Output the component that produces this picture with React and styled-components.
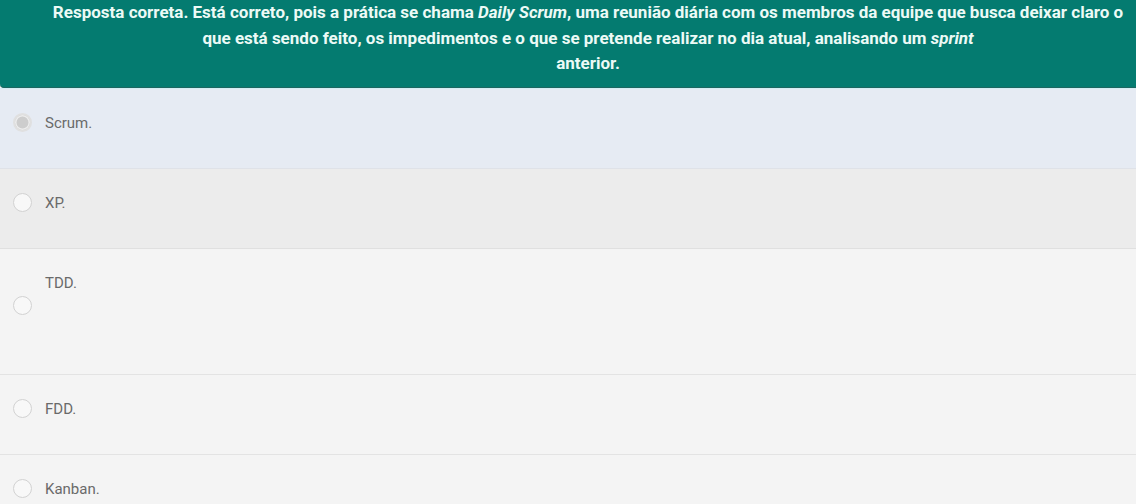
import React from 'react'
import styled, { createGlobalStyle } from 'styled-components'

const GlobalStyle = createGlobalStyle`
body {
  margin: 0;
  background-color: #f4f4f4;
  font-family: Roboto, "Liberation Sans", sans-serif;
}
`;

const Page = styled.div`
width: 1136px;
height: 504px;
overflow: hidden;
`;

const Feedback = styled.div`
background-color: #047b70;
color: #ecfaf6;
font-size: 17px;
font-weight: 700;
line-height: 25.5px;
text-align: center;
white-space: nowrap;
padding: 0 0 10px 40px;
border-bottom: 1px solid #1d6660;
border-bottom-left-radius: 4px;
`;

const Em = styled.em`
font-style: italic;
`;

const List = styled.div`
display: flex;
flex-direction: column;
border-top: 1px solid #d3eef4;
`;

const Option = styled.label`
display: flex;
align-items: center;
gap: 13px;
padding: 24px 16px 35px 13px;
background-color: ${p => p.$bg};
border-bottom: 1px solid ${p => p.$line};
cursor: pointer;
`;

const Radio = styled.span`
flex: none;
width: 19px;
height: 19px;
box-sizing: border-box;
border-radius: 50%;
border: ${p => (p.$checked ? '2px solid #e0e0e0' : '1.5px solid #d2d2d2')};
background-color: ${p => (p.$checked ? '#cdcdcd' : '#f8f8f8')};
box-shadow: ${p => (p.$checked ? 'inset 0 0 0 1.5px #ececec' : 'none')};
`;

const Label = styled.div`
display: flex;
flex-direction: column;
`;

const Text = styled.span`
font-size: 15px;
line-height: 20px;
color: #6a6a6a;
`;

const Blank = styled.div`
height: ${p => p.$h}px;
`;

const options = [
  { text: 'Scrum.', checked: true, bg: '#e6ebf3', line: '#dfe2e8' },
  { text: 'XP.', bg: '#ececec', line: '#e0e0e0' },
  { text: 'TDD.', bg: '#f4f4f4', line: '#e3e3e3', extra: 46 },
  { text: 'FDD.', bg: '#f4f4f4', line: '#e3e3e3' },
  { text: 'Kanban.', bg: '#f4f4f4', line: '#e3e3e3' },
];

export default function App() {
  return (
    <Page>
      <GlobalStyle />
      <Feedback>
        Resposta correta. Está correto, pois a prática se chama <Em>Daily Scrum</Em>, uma reunião diária com os membros da equipe que busca deixar claro o
        <br />
        que está sendo feito, os impedimentos e o que se pretende realizar no dia atual, analisando um <Em>sprint</Em>
        <br />
        anterior.
      </Feedback>
      <List>
        {options.map(o => (
          <Option key={o.text} $bg={o.bg} $line={o.line}>
            <Radio $checked={o.checked} />
            <Label>
              <Text>{o.text}</Text>
              {o.extra && <Blank $h={o.extra} />}
            </Label>
          </Option>
        ))}
      </List>
    </Page>
  )
}
